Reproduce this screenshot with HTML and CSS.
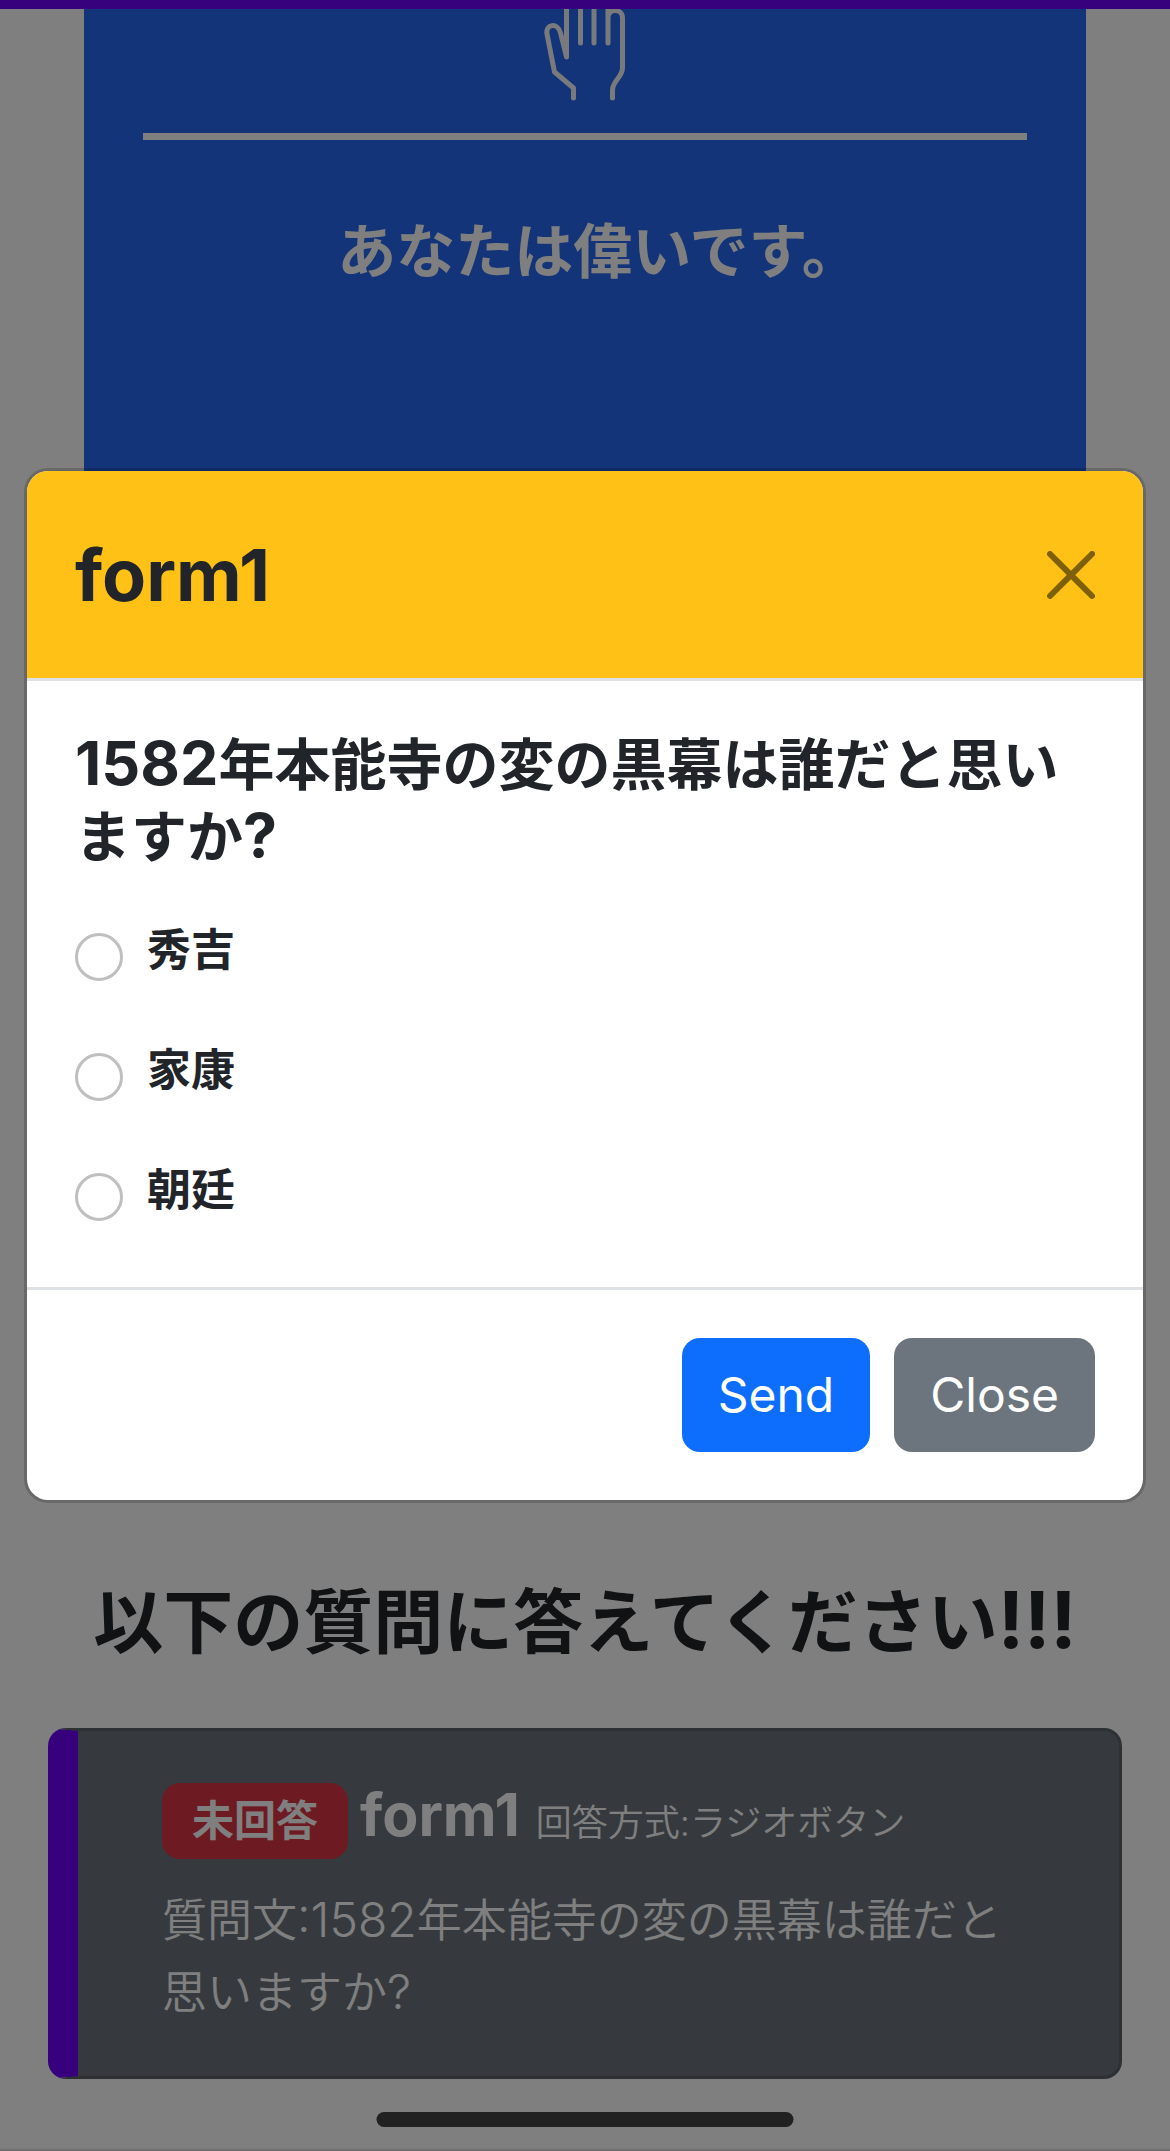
FILE: index.html
```html
<!DOCTYPE html>
<html lang="ja">
<head>
<meta charset="utf-8">
<meta name="viewport" content="width=device-width, initial-scale=1">
<title>form1</title>
<link rel="stylesheet" href="styles.css">
</head>
<body>
<div class="page">
  <main class="content">
    <section class="hero">
      <svg class="hand" viewBox="0 0 90 92" width="90" height="92" aria-hidden="true">
        <path d="M26.500 0V48L20.500 24C18 13 5 15 7 25L14.500 63L33.500 79V89M40.500 0V34M54 0V34M68 0V34M68 9C68-1 82.500-1 82.500 9V59C82.500 68 72.500 72 72.500 81V89"/>
      </svg>
      <hr class="rule">
      <p class="praise">あなたは偉いです。</p>
    </section>
    <h1 class="lead">以下の質問に答えてください<span class="lead-latin">!!!</span></h1>
    <article class="card">
      <h2 class="card-title"><span class="badge">未回答</span><span class="card-name">form1</span><small class="card-kind">回答方式:ラジオボタン</small></h2>
      <p class="card-text">質問文<span class="text-latin">:1582</span>年本能寺の変の黒幕は誰だと思いますか<span class="text-latin">?</span></p>
    </article>
  </main>
</div>
<div class="backdrop">
  <form class="modal" role="dialog" aria-labelledby="modal-title">
    <header class="modal-header">
      <h2 class="modal-title" id="modal-title">form1</h2>
      <button class="btn-close" type="button" aria-label="Close">
        <svg viewBox="0 0 16 16" width="48" height="48" aria-hidden="true"><path d="M.293.293a1 1 0 0 1 1.414 0L8 6.586 14.293.293a1 1 0 1 1 1.414 1.414L9.414 8l6.293 6.293a1 1 0 0 1-1.414 1.414L8 9.414l-6.293 6.293a1 1 0 0 1-1.414-1.414L6.586 8 .293 1.707a1 1 0 0 1 0-1.414z"/></svg>
      </button>
    </header>
    <fieldset class="modal-body">
      <legend class="question"><span class="question-latin">1582</span>年本能寺の変の黒幕は誰だと思いますか<span class="question-latin">?</span></legend>
      <div class="choice"><input type="radio" name="answer" id="a1"><label for="a1">秀吉</label></div>
      <div class="choice"><input type="radio" name="answer" id="a2"><label for="a2">家康</label></div>
      <div class="choice"><input type="radio" name="answer" id="a3"><label for="a3">朝廷</label></div>
    </fieldset>
    <footer class="modal-footer">
      <button class="btn btn-primary" type="submit">Send</button>
      <button class="btn btn-secondary" type="button">Close</button>
    </footer>
  </form>
</div>
<div class="home-indicator"></div>
</body>
</html>
```
FILE: styles.css
```css
* { box-sizing: border-box; }

body {
  position: relative;
  margin: 0;
  min-height: 100vh;
  color: #212529;
  font-family: Inter, "Noto Sans CJK JP", sans-serif;
  font-size: 48px;
}

h1, h2, p { margin: 0; }

/* Page behind the dialog */
.page {
  min-height: 100vh;
  border-top: 9px solid #6e00f8;
  border-bottom: 2px solid #ddd;
  background: #fff;
}

.content { padding: 0 48px 60px; }

.hero {
  display: flex;
  flex-direction: column;
  align-items: center;
  min-height: 1002px;
  margin: 0 36px;
  padding: 0 59px;
  background: #2868f4;
}

.hand {
  fill: none;
  stroke: #f0f4f6;
  stroke-width: 5;
  stroke-linecap: round;
  stroke-linejoin: round;
}

.rule {
  width: 100%;
  height: 7px;
  margin: 32px 0 64px;
  border: 0;
  background: #fff;
}

.praise {
  padding-left: 28px;
  color: #fff;
  font-family: "Noto Sans CJK JP", sans-serif;
  font-size: 59px;
  font-weight: 700;
  line-height: 88px;
}

.lead {
  margin: 570px 0 63px;
  font-size: 70px;
  font-weight: 700;
  line-height: 84px;
  text-align: center;
}

.lead-latin {
  font-size: 78px;
  line-height: 1;
}

.card {
  padding: 48px 84px 47px;
  border: 3px solid #5a6268;
  border-left: 30px solid #6e00f8;
  border-radius: 18px;
  background: #6c757d;
  color: #fff;
}

.card-title {
  display: flex;
  align-items: baseline;
  margin-bottom: 26px;
}

.badge {
  padding: 17px 30px;
  border-radius: 18px;
  background: #dc3545;
  font-size: 42px;
  line-height: 42px;
}

.card-name {
  margin: 0 16px 0 12px;
  font-size: 59px;
  line-height: 72px;
}

.card-kind {
  font-size: 36px;
  font-weight: 350;
}

.card-text {
  font-size: 45px;
  font-weight: 350;
  line-height: 72px;
}

.text-latin {
  font-size: 48px;
  line-height: 1;
}

/* Dialog */
.backdrop {
  position: absolute;
  inset: 0;
  display: flex;
  align-items: center;
  padding: 0 24px 180px;
  background: rgba(0, 0, 0, .5);
}

.modal {
  width: 100%;
  border: 3px solid rgba(0, 0, 0, .18);
  border-radius: 24px;
  background: #fff;
  background-clip: padding-box;
}

.modal-header {
  display: flex;
  align-items: center;
  justify-content: space-between;
  padding: 48px;
  border-bottom: 3px solid #dee2e6;
  border-radius: 21px 21px 0 0;
  background: #ffc116;
  background-clip: padding-box;
}

.modal-title {
  font-size: 72px;
  line-height: 111px;
}

.btn-close {
  display: flex;
  padding: 0;
  border: 0;
  background: none;
  opacity: .5;
}

.modal-body {
  display: flex;
  flex-direction: column;
  gap: 48px;
  margin: 0;
  padding: 48px 48px 54px;
  border: 0;
}

.question {
  float: left;
  padding: 0;
  font-size: 56px;
  font-weight: 700;
  line-height: 72px;
}

.question-latin {
  font-size: 61px;
  line-height: 1;
}

.choice {
  display: flex;
  align-items: flex-start;
  gap: 24px;
  font-size: 44px;
  font-weight: 700;
  line-height: 58px;
}

.choice input {
  flex: none;
  appearance: none;
  width: 48px;
  height: 48px;
  margin: 12px 0;
  border: 3px solid #bfbfbf;
  border-radius: 50%;
  background: #fff;
}

.modal-footer {
  display: flex;
  justify-content: flex-end;
  gap: 24px;
  padding: 48px;
  border-top: 3px solid #dee2e6;
}

.btn {
  padding: 21px 36px;
  border: 0;
  border-radius: 18px;
  color: #fff;
  font-family: inherit;
  font-size: 48px;
  line-height: 72px;
}

.btn-primary { background: #0d6efd; }
.btn-secondary { background: #6c757d; }

.home-indicator {
  position: absolute;
  bottom: 24px;
  left: 50%;
  width: 417px;
  height: 15px;
  border-radius: 8px;
  background: #212121;
  transform: translateX(-50%);
}
```
